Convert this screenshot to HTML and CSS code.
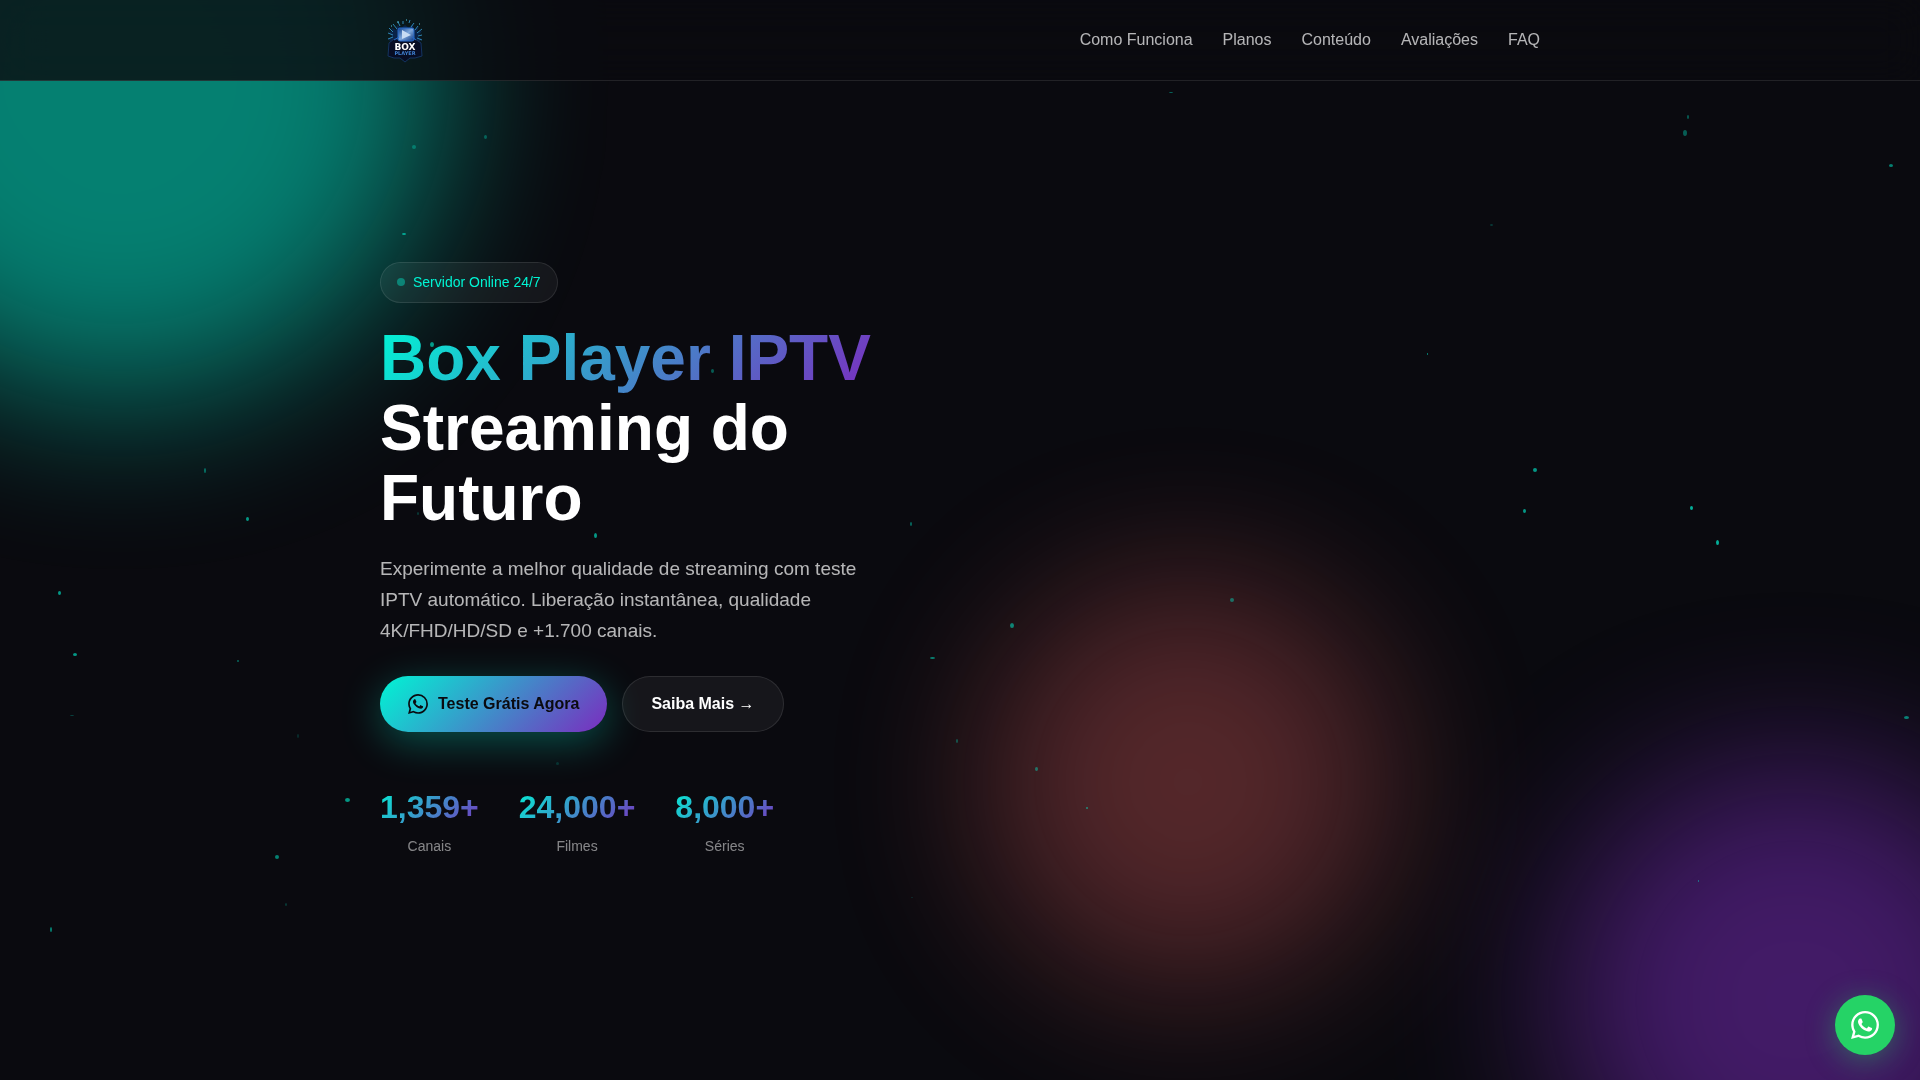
FILE: index.html
```html
<!DOCTYPE html>
<html lang="pt-BR">

<head>
    <meta charset="UTF-8">
    <meta name="viewport" content="width=device-width, initial-scale=1.0">
    <title>Box Player IPTV - Streaming do Futuro</title>
    <link rel="stylesheet" href="styles.css">
</head>

<body>
    <!-- Fundo -->
    <div class="bg-animation">
        <div class="gradient-orb orb-1"></div>
        <div class="gradient-orb orb-2"></div>
        <div class="gradient-orb orb-3"></div>
    </div>
    <div class="particles" id="particles"></div>

    <!-- Header -->
    <header class="header">
        <div class="container header-content">
            <a href="#inicio" class="logo" aria-label="Box Player">
                <svg viewBox="0 0 50 50" width="50" height="50">
                    <defs>
                        <linearGradient id="tela" x1="0" y1="0" x2="1" y2="1">
                            <stop offset="0" stop-color="#0f3f8c" />
                            <stop offset="0.5" stop-color="#7fa8dc" />
                            <stop offset="1" stop-color="#0b3580" />
                        </linearGradient>
                    </defs>
                    <path d="M9 16l4 1-2-5 5 3 1-5 4 3 4-3 4 3 4-4 1 6 5-3-2 5 5-1-4 6 4 2-4 4H12l-4-4 4-2z" fill="#0a2247" />
                    <path d="M9 13l4 4M8 18l5 2M13 9l4 5M18 7l2 4M23 6v3M29 8l1-3M34 8l-3 4M38 11l-3 4M42 14l-5 4M42 20l-4 1M8 24l5-2M42 25l-5-2" stroke="#2f86b5" stroke-width="1" fill="none" />
                    <path d="M17 7h2M26 5h1M39 9h1M11 11h1" stroke="#58c4e0" stroke-width="1" />
                    <path d="M9 28l5-4h21l6 4 1 13-7 2h-5l-5 4-5-4h-6l-6-2z" fill="#070d24" stroke="#14335f" stroke-width="1" />
                    <rect x="18" y="13" width="16" height="13" rx="2" fill="url(#tela)" stroke="#2468c8" stroke-width="1" />
                    <path d="M22 15l9 5-9 4z" fill="#c8dcf4" />
                    <path d="M14 25l5-3M36 25l-4-3" stroke="#2468c8" stroke-width="1" />
                    <text x="25" y="35" class="logo-box">BOX</text>
                    <text x="25" y="40" class="logo-player">PLAYER</text>
                </svg>
            </a>
            <nav class="nav">
                <a href="#como-funciona">Como Funciona</a>
                <a href="#planos">Planos</a>
                <a href="#conteudo">Conteúdo</a>
                <a href="#avaliacoes">Avaliações</a>
                <a href="#faq">FAQ</a>
            </nav>
        </div>
    </header>

    <!-- Hero -->
    <section class="hero" id="inicio">
        <div class="container hero-content">
            <div class="hero-text">
                <div class="hero-badge">
                    <span class="pulse"></span>
                    Servidor Online 24/7
                </div>
                <h1><span class="gradient-text">Box Player IPTV</span><br>Streaming do Futuro</h1>
                <p>Experimente a melhor qualidade de streaming com teste IPTV automático. Liberação instantânea, qualidade 4K/FHD/HD/SD e +1.700 canais.</p>

                <div class="cta-buttons">
                    <a href="#teste" class="btn btn-primary">
                        <svg width="20" height="20" viewBox="0 0 24 24" fill="currentColor"><use href="#whatsapp" /></svg>
                        Teste Grátis Agora
                    </a>
                    <a href="#como-funciona" class="btn btn-secondary">Saiba Mais →</a>
                </div>

                <div class="stats">
                    <div class="stat-item">
                        <div class="stat-number">1,359+</div>
                        <div class="stat-label">Canais</div>
                    </div>
                    <div class="stat-item">
                        <div class="stat-number">24,000+</div>
                        <div class="stat-label">Filmes</div>
                    </div>
                    <div class="stat-item">
                        <div class="stat-number">8,000+</div>
                        <div class="stat-label">Séries</div>
                    </div>
                </div>
            </div>
        </div>
    </section>

    <!-- Botão flutuante -->
    <a href="#whatsapp-chat" class="whatsapp-float" aria-label="WhatsApp">
        <svg width="28" height="28" viewBox="0 0 24 24" fill="currentColor"><use href="#whatsapp" /></svg>
    </a>

    <svg class="icons" width="0" height="0">
        <symbol id="whatsapp" viewBox="0 0 24 24">
            <path d="M17.472 14.382c-.297-.149-1.758-.867-2.03-.967-.273-.099-.471-.148-.67.15-.197.297-.767.966-.94 1.164-.173.199-.347.223-.644.075-.297-.15-1.255-.463-2.39-1.475-.883-.788-1.48-1.761-1.653-2.059-.173-.297-.018-.458.13-.606.134-.133.298-.347.446-.52.149-.174.198-.298.298-.497.099-.198.05-.371-.025-.52-.075-.149-.669-1.612-.916-2.207-.242-.579-.487-.5-.669-.51-.173-.008-.371-.01-.57-.01-.198 0-.52.074-.792.372-.272.297-1.04 1.016-1.04 2.479 0 1.462 1.065 2.875 1.213 3.074.149.198 2.096 3.2 5.077 4.487.709.306 1.262.489 1.694.625.712.227 1.36.195 1.871.118.571-.085 1.758-.719 2.006-1.413.248-.694.248-1.289.173-1.413-.074-.124-.272-.198-.57-.347m-5.421 7.403h-.004a9.87 9.87 0 01-5.031-1.378l-.361-.214-3.741.982.998-3.648-.235-.374a9.86 9.86 0 01-1.51-5.26c.001-5.45 4.436-9.884 9.888-9.884 2.64 0 5.122 1.03 6.988 2.898a9.825 9.825 0 012.893 6.994c-.003 5.45-4.437 9.884-9.885 9.884m8.413-18.297A11.815 11.815 0 0012.05 0C5.495 0 .16 5.335.157 11.892c0 2.096.547 4.142 1.588 5.945L.057 24l6.305-1.654a11.882 11.882 0 005.683 1.448h.005c6.554 0 11.89-5.335 11.893-11.893a11.821 11.821 0 00-3.48-8.413z" />
        </symbol>
    </svg>

    <script src="script.js"></script>
</body>

</html>
```
FILE: styles.css
```css
:root {
    --primary: #00f5d4;
    --secondary: #7b2cbf;
    --accent: #ff6b6b;
    --dark: #0a0a0f;
    --glass: rgba(255, 255, 255, 0.05);
    --glass-border: rgba(255, 255, 255, 0.1);
    --gradient: linear-gradient(135deg, #00f5d4 0%, #7b2cbf 100%);
}

* {
    margin: 0;
    padding: 0;
    box-sizing: border-box;
}

body {
    font-family: 'Liberation Sans', Arial, sans-serif;
    background: var(--dark);
    color: #fff;
    line-height: 26px;
    overflow-x: hidden;
}

a {
    text-decoration: none;
}

.container {
    max-width: 1200px;
    width: 100%;
    margin: 0 auto;
    padding: 0 20px;
}

/* Fundo */
.bg-animation,
.particles {
    position: fixed;
    inset: 0;
    overflow: hidden;
    pointer-events: none;
}

.bg-animation {
    z-index: -1;
}

.gradient-orb {
    position: absolute;
    border-radius: 50%;
    filter: blur(80px);
    opacity: 0.5;
}

.orb-1 {
    width: 640px;
    height: 640px;
    top: -240px;
    left: -200px;
    background: var(--primary);
}

.orb-2 {
    width: 480px;
    height: 480px;
    right: -115px;
    bottom: -160px;
    background: var(--secondary);
}

.orb-3 {
    width: 410px;
    height: 410px;
    top: calc(50% + 37px);
    left: calc(50% + 23px);
    background: var(--accent);
    opacity: 0.3;
}

.particle {
    position: absolute;
    background: var(--primary);
    border-radius: 50%;
}

/* Header */
.header {
    position: fixed;
    top: 0;
    left: 0;
    width: 100%;
    z-index: 100;
    padding: 15px 0;
    background: rgba(10, 10, 15, 0.8);
    backdrop-filter: blur(20px);
    border-bottom: 1px solid var(--glass-border);
}

.header-content {
    display: flex;
    justify-content: space-between;
    align-items: center;
}

.logo,
.logo svg {
    display: block;
}

.logo text {
    font-family: 'DejaVu Sans', sans-serif;
    text-anchor: middle;
    font-weight: 700;
}

.logo-box {
    font-size: 9px;
    fill: #fff;
}

.logo-player {
    font-size: 5px;
    fill: #3f7fd0;
}

.nav {
    display: flex;
    gap: 30px;
}

.nav a {
    color: rgba(255, 255, 255, 0.7);
    font-size: 16px;
}

.nav a:hover {
    color: var(--primary);
}

/* Hero */
.hero {
    min-height: 100vh;
    display: flex;
    align-items: center;
    padding: 120px 0 80px;
}

.hero-content {
    display: grid;
    grid-template-columns: 1fr 1fr;
    gap: 60px;
    align-items: center;
}

.hero-badge {
    display: inline-flex;
    align-items: center;
    gap: 8px;
    padding: 8px 16px;
    margin-bottom: 20px;
    background: var(--glass);
    border: 1px solid var(--glass-border);
    border-radius: 50px;
    color: var(--primary);
    font-size: 14px;
    line-height: 23px;
}

.pulse {
    width: 8px;
    height: 8px;
    border-radius: 50%;
    background: var(--primary);
    opacity: 0.4;
}

.hero h1 {
    font-size: 64px;
    font-weight: 700;
    line-height: 70px;
    margin-bottom: 20px;
}

.gradient-text,
.stat-number {
    background: var(--gradient);
    -webkit-background-clip: text;
    background-clip: text;
    -webkit-text-fill-color: transparent;
}

.hero p {
    max-width: 500px;
    font-size: 19px;
    line-height: 31px;
    color: rgba(255, 255, 255, 0.7);
    margin-bottom: 30px;
}

.cta-buttons {
    display: flex;
    flex-wrap: wrap;
    gap: 15px;
    margin-bottom: 50px;
}

.btn {
    display: inline-flex;
    align-items: center;
    gap: 10px;
    padding: 15px 28px;
    border-radius: 50px;
    font-size: 16px;
    font-weight: 600;
}

.btn-primary {
    background: var(--gradient);
    color: var(--dark);
    box-shadow: 0 10px 40px rgba(0, 245, 212, 0.3);
}

.btn-secondary {
    padding: 14px 28px;
    background: var(--glass);
    border: 1px solid var(--glass-border);
    color: #fff;
}

.stats {
    display: flex;
    gap: 40px;
}

.stat-item {
    text-align: center;
}

.stat-number {
    font-size: 32px;
    font-weight: 700;
    line-height: 51px;
}

.stat-label {
    font-size: 14px;
    color: rgba(255, 255, 255, 0.5);
}

/* Botão flutuante */
.whatsapp-float {
    position: fixed;
    right: 25px;
    bottom: 25px;
    z-index: 99;
    width: 60px;
    height: 60px;
    display: flex;
    align-items: center;
    justify-content: center;
    border-radius: 50%;
    background: #25d366;
    color: #fff;
    box-shadow: 0 5px 30px rgba(37, 211, 102, 0.4);
}

.icons {
    position: absolute;
}

@media (max-width: 900px) {
    .nav {
        display: none;
    }

    .hero-content {
        grid-template-columns: 1fr;
    }

    .hero h1 {
        font-size: 40px;
        line-height: 44px;
    }
}
```
FILE: script.js
```js
// x, y (numa tela de 1920x1080), largura, altura, opacidade
const particles = [
    [1169, 92, 4, 1, 0.4],
    [412, 145, 4, 4, 0.3],
    [484, 135, 3, 4, 0.3],
    [402, 233, 4, 2, 0.6],
    [430, 342, 4, 5, 0.6],
    [711, 369, 3, 4, 0.35],
    [204, 468, 2, 5, 0.4],
    [246, 517, 3, 4, 0.6],
    [58, 591, 3, 4, 0.6],
    [73, 653, 4, 3, 0.6],
    [237, 660, 2, 2, 0.4],
    [70, 715, 4, 1, 0.25],
    [297, 734, 2, 4, 0.15],
    [345, 798, 5, 4, 0.6],
    [275, 855, 4, 4, 0.5],
    [285, 903, 2, 3, 0.2],
    [50, 927, 2, 5, 0.5],
    [417, 512, 2, 3, 0.2],
    [556, 762, 3, 3, 0.15],
    [594, 533, 3, 5, 0.6],
    [1687, 115, 2, 4, 0.35],
    [1683, 130, 4, 6, 0.35],
    [1889, 164, 4, 3, 0.5],
    [1490, 224, 3, 2, 0.2],
    [1427, 353, 1, 2, 0.6],
    [1533, 468, 4, 4, 0.6],
    [1523, 509, 3, 4, 0.6],
    [1690, 506, 3, 4, 0.7],
    [1716, 540, 3, 5, 0.7],
    [910, 522, 2, 4, 0.4],
    [1010, 623, 4, 5, 0.5],
    [930, 657, 5, 2, 0.5],
    [1230, 598, 4, 4, 0.4],
    [956, 739, 2, 4, 0.3],
    [1035, 767, 3, 4, 0.4],
    [1086, 807, 2, 2, 0.5],
    [911, 897, 2, 1, 0.15],
    [1904, 716, 5, 3, 0.5],
    [1698, 880, 1, 2, 0.5]
];

const box = document.getElementById("particles");
particles.forEach(([x, y, w, h, o]) => {
    box.innerHTML += `<div class="particle" style="left:${x / 19.2}%;top:${y / 10.8}%;width:${w}px;height:${h}px;opacity:${o}"></div>`;
});
```
